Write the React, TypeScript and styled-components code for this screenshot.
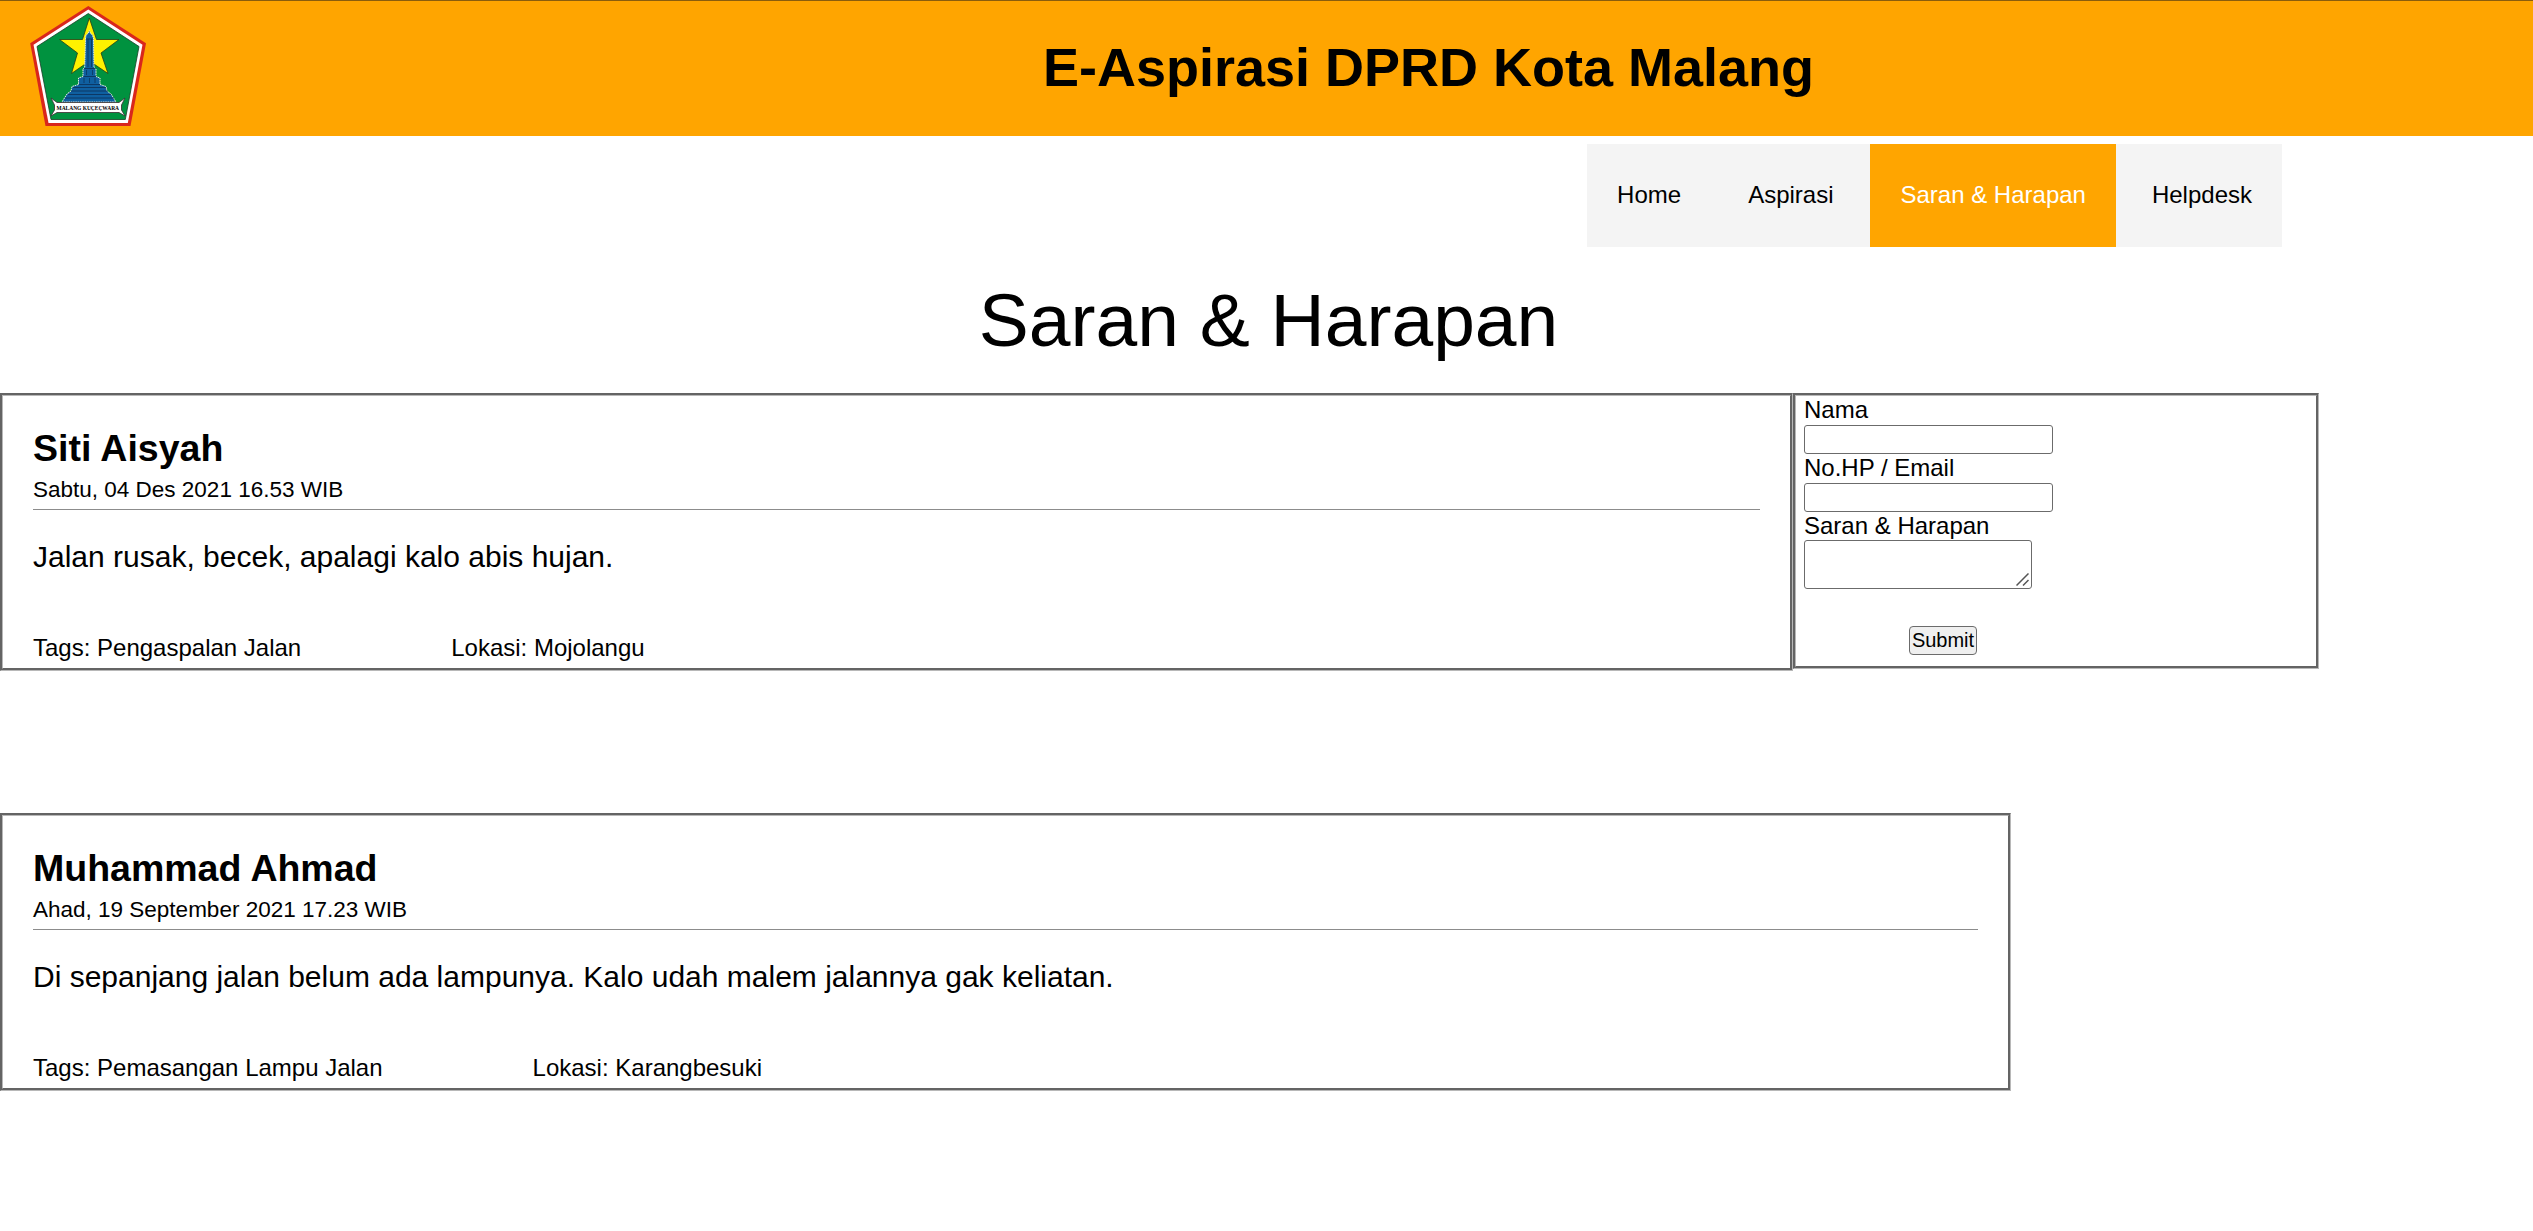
import React from "react";
import styled, { createGlobalStyle, css } from "styled-components";

const Base = createGlobalStyle`
  body {
    margin: 0;
    background: #fff;
    color: #000;
    font-family: Arial, "Liberation Sans", sans-serif;
    font-size: 24px;
    line-height: 27px;
  }
  * { box-sizing: border-box; }
`;

const Header = styled.header`
  display: flex;
  align-items: center;
  height: 136px;
  border-top: 1px solid #8a5d0c;
  background: #ffa500;
`;

const Emblem = styled.svg`
  flex: none;
  display: block;
  width: 120px;
  height: 122px;
  margin: 0 0 5px 29px;
`;

const SiteTitle = styled.h1`
  flex: 1;
  margin: 0 0 3px 175px;
  text-align: center;
  font-size: 54px;
  line-height: 62px;
  font-weight: bold;
`;

const Nav = styled.nav`
  display: flex;
  justify-content: flex-end;
  margin: 8px 251px 0 0;
`;

const NavList = styled.ul`
  display: flex;
  margin: 0;
  padding: 0;
  list-style: none;
  background: #f4f4f4;
`;

const NavItem = styled.li<{ $gap?: number }>`
  margin-left: ${(p) => p.$gap ?? 0}px;
`;

const NavLink = styled.a<{ $active?: boolean }>`
  display: block;
  height: 103px;
  padding: 0 30px;
  line-height: 102px;
  color: #000;
  text-decoration: none;
  ${(p) => p.$active && css`
    background: #ffa500;
    color: #fff;
  `}
`;

const PageTitle = styled.h2`
  margin: 28px 0 27px;
  padding-left: 4px;
  text-align: center;
  font-size: 75px;
  line-height: 91px;
  font-weight: normal;
`;

const groove = css`
  border: 3px groove #b8b8b8;
`;

const TopRow = styled.div`
  display: flex;
  align-items: flex-start;
`;

const Card = styled.article<{ $width: number }>`
  ${groove}
  width: ${(p) => p.$width}px;
  height: 278px;
  padding: 30px;
`;

const Author = styled.h3`
  margin: 0;
  font-size: 37.5px;
  line-height: 44px;
`;

const Posted = styled.p`
  margin: 6px 0 6px;
  font-size: 22.5px;
  line-height: 27px;
`;

const Rule = styled.hr`
  height: 1px;
  margin: 0;
  border: 0;
  background: #8c8c8c;
`;

const Message = styled.p`
  margin: 29px 0 0;
  font-size: 30px;
  line-height: 36px;
`;

const Meta = styled.div`
  display: flex;
  gap: 150px;
  margin-top: 59px;
`;

const Form = styled.form`
  ${groove}
  display: flex;
  flex-direction: column;
  align-items: flex-start;
  width: 526px;
  height: 276px;
  padding: 0 8px;
`;

const Label = styled.label<{ $height?: number }>`
  height: ${(p) => p.$height ?? 29}px;
  line-height: 28px;
`;

const Field = styled.input`
  width: 249px;
  height: 29px;
  border: 1px solid #6b6b6b;
  border-radius: 3px;
  background: #fff;
`;

const AreaWrap = styled.div`
  position: relative;
  width: 228px;
  height: 49px;
`;

const Area = styled.textarea`
  display: block;
  width: 100%;
  height: 100%;
  border: 1px solid #6b6b6b;
  border-radius: 3px;
  background: #fff;
  resize: none;
`;

const Grip = styled.svg`
  position: absolute;
  right: 3px;
  bottom: 3px;
  width: 13px;
  height: 13px;
  pointer-events: none;
`;

const Submit = styled.button`
  width: 68px;
  height: 29px;
  margin: 37px 0 0 105px;
  padding: 0 0 1px;
  border: 1px solid #6b6b6b;
  border-radius: 4px;
  background: #efefef;
  font: 20px/24px Arial, "Liberation Sans", sans-serif;
  color: #000;
`;

const Spacer = styled.section`
  margin-top: 142px;
`;

function CityEmblem() {
  return (
    <Emblem viewBox="29 5 120 122">
      <polygon points="88.300,6 146,43.300 130.500,126 45.500,126 30.200,43.300" fill="#d9261c" />
      <polygon points="88.300,9.500 142.500,44.800 127.800,123 48.500,123 33.500,44.800" fill="#fff" />
      <polygon points="88.300,13.500 139,46.500 125.300,119.500 51,119.500 37,46.500" fill="#00923f" stroke="#173d24" strokeWidth=".8" />
      <polygon points="89.300,18 96.500,39.500 119,39.500 101,53 108,73.500 89.500,61 71.500,73.500 77.500,53 59.500,39.500 82.500,39.500" fill="#fff200" stroke="#263d16" strokeWidth=".8" />
      <path d="M85.500 39 86 35 88 33.500 89.300 30.500 90.600 33.500 92.600 35 93.500 39 94 67.500 96 69 96 76.500 100 78 100 84.500 106 86.500 107 91 111 94 116 102H62L67 94 71 91 72 86.500 78.500 84.500 78.500 78 83 76.500 83 69 84.700 67.500Z" fill="#0f5fa0" stroke="#e6efe0" strokeWidth="1" strokeDasharray="1.600 .7" />
      <path d="M86 39H93M84 68.500H95.500M83.500 76.500H96M79 84.500H100M73 87.500H106M71 91H108M68 94.500H111M65 98H114" stroke="#0b2f55" strokeWidth=".8" />
      <path d="M88 39V67M91.500 39V67M86.500 70V75M92.500 70V75M84 78V83M89.500 78V83M95 78V83" stroke="#0b2f55" strokeWidth=".7" />
      <path d="M51 98 57 102.500H119L125 98 121.500 105V110L125 116 119 112.500H57L51 116 54.500 110V105Z" fill="#fff" stroke="#3c2b31" strokeWidth=".8" />
      <text x="56.500" y="109.700" textLength="62.500" lengthAdjust="spacingAndGlyphs" fontFamily="Liberation Serif, serif" fontSize="7" fontWeight="bold">MALANG KUÇEÇWARA</text>
    </Emblem>
  );
}

type Post = { author: string; posted: string; message: string; tags: string; place: string; width: number };

const posts: Post[] = [
  { author: "Siti Aisyah", posted: "Sabtu, 04 Des 2021 16.53 WIB", message: "Jalan rusak, becek, apalagi kalo abis hujan.", tags: "Pengaspalan Jalan", place: "Mojolangu", width: 1793 },
  { author: "Muhammad Ahmad", posted: "Ahad, 19 September 2021 17.23 WIB", message: "Di sepanjang jalan belum ada lampunya. Kalo udah malem jalannya gak keliatan.", tags: "Pemasangan Lampu Jalan", place: "Karangbesuki", width: 2011 },
];

function PostCard({ post }: { post: Post }) {
  return (
    <Card $width={post.width}>
      <Author>{post.author}</Author>
      <Posted>{post.posted}</Posted>
      <Rule />
      <Message>{post.message}</Message>
      <Meta>
        <span>Tags: {post.tags}</span>
        <span>Lokasi: {post.place}</span>
      </Meta>
    </Card>
  );
}

export default function App() {
  return (
    <>
      <Base />
      <Header>
        <CityEmblem />
        <SiteTitle>E-Aspirasi DPRD Kota Malang</SiteTitle>
      </Header>
      <Nav>
        <NavList>
          <NavItem><NavLink href="#">Home</NavLink></NavItem>
          <NavItem $gap={7}><NavLink href="#">Aspirasi</NavLink></NavItem>
          <NavItem $gap={7}><NavLink href="#" $active>Saran &amp; Harapan</NavLink></NavItem>
          <NavItem $gap={6}><NavLink href="#">Helpdesk</NavLink></NavItem>
        </NavList>
      </Nav>
      <PageTitle>Saran &amp; Harapan</PageTitle>
      <TopRow>
        <PostCard post={posts[0]} />
        <Form>
          <Label htmlFor="nama">Nama</Label>
          <Field id="nama" />
          <Label htmlFor="kontak">No.HP / Email</Label>
          <Field id="kontak" />
          <Label htmlFor="saran" $height={28}>Saran &amp; Harapan</Label>
          <AreaWrap>
            <Area id="saran" />
            <Grip viewBox="0 0 13 13" stroke="#555" strokeWidth="1.500">
              <path d="M.5 12.500 12.500 .5M7 12.500 12.500 7" />
            </Grip>
          </AreaWrap>
          <Submit type="button">Submit</Submit>
        </Form>
      </TopRow>
      <Spacer>
        <PostCard post={posts[1]} />
      </Spacer>
    </>
  );
}
